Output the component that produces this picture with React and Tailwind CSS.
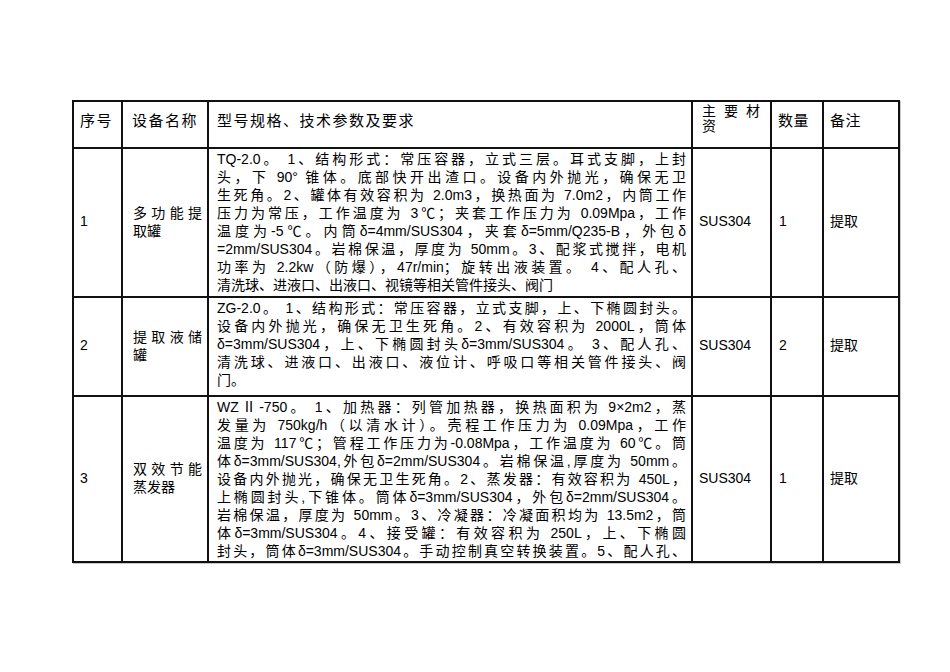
import React from "react";

const FONT = { fontFamily: '"Liberation Sans", "Noto Sans CJK SC", sans-serif' };

const rows = [
  {
    no: "1",
    name: ["多功能提", "取罐"],
    desc: [
      "TQ-2.0。 1、结构形式：常压容器，立式三层。耳式支脚，上封",
      "头，下 90° 锥体。底部快开出渣口。设备内外抛光，确保无卫",
      "生死角。2、罐体有效容积为 2.0m3，换热面为 7.0m2，内筒工作",
      "压力为常压，工作温度为 3℃；夹套工作压力为 0.09Mpa，工作",
      "温度为-5℃。内筒δ=4mm/SUS304，夹套δ=5mm/Q235-B，外包δ",
      "=2mm/SUS304。岩棉保温，厚度为 50mm。3、配浆式搅拌，电机",
      "功率为 2.2kw（防爆），47r/min；旋转出液装置。 4、配人孔、",
      "清洗球、进液口、出液口、视镜等相关管件接头、阀门",
    ],
    justifyAll: false,
    mat: "SUS304",
    qty: "1",
    note: "提取",
  },
  {
    no: "2",
    name: ["提取液储", "罐"],
    desc: [
      "ZG-2.0。 1、结构形式：常压容器，立式支脚，上、下椭圆封头。",
      "设备内外抛光，确保无卫生死角。2、有效容积为 2000L，筒体",
      "δ=3mm/SUS304，上、下椭圆封头δ=3mm/SUS304。 3、配人孔、",
      "清洗球、进液口、出液口、液位计、呼吸口等相关管件接头、阀",
      "门。",
    ],
    justifyAll: false,
    mat: "SUS304",
    qty: "2",
    note: "提取",
  },
  {
    no: "3",
    name: ["双效节能", "蒸发器"],
    desc: [
      "WZⅡ-750。 1、加热器：列管加热器，换热面积为 9×2m2，蒸",
      "发量为 750kg/h（以清水计）。壳程工作压力为 0.09Mpa，工作",
      "温度为 117℃；管程工作压力为-0.08Mpa，工作温度为 60℃。筒",
      "体δ=3mm/SUS304,外包δ=2mm/SUS304。岩棉保温,厚度为 50mm。",
      "设备内外抛光，确保无卫生死角。2、蒸发器：有效容积为 450L，",
      "上椭圆封头,下锥体。筒体δ=3mm/SUS304，外包δ=2mm/SUS304。",
      "岩棉保温，厚度为 50mm。3、冷凝器：冷凝面积均为 13.5m2，筒",
      "体δ=3mm/SUS304。4、接受罐：有效容积为 250L，上、下椭圆",
      "封头，筒体δ=3mm/SUS304。手动控制真空转换装置。5、配人孔、",
    ],
    justifyAll: true,
    mat: "SUS304",
    qty: "1",
    note: "提取",
  },
];

const cell = "border-r-2 border-b-2 border-[#111] overflow-hidden";

function Lines({ lines, lh = "leading-[18px]", justifyAll = false }) {
  return (
    <div className={`w-full ${lh}`}>
      {lines.map((l, i) => (
        <div
          key={i}
          className={
            justifyAll || i < lines.length - 1
              ? "text-justify [text-align-last:justify]"
              : "text-left"
          }
        >
          {l}
        </div>
      ))}
    </div>
  );
}

export default function App() {
  return (
    <div className="w-[950px] h-[672px] bg-white pt-[100px] pl-[72px] text-black" style={FONT}>
      <div className="grid w-[828px] grid-cols-[49px_86px_484px_79px_52px_76px] grid-rows-[47px_149px_99px_166px] border-l-2 border-t-2 border-[#111] shadow-[1px_1px_0_#c8c8c8]">
        {/* header */}
        <div className={`${cell} flex items-center pb-[6px] pl-[6px] text-[15px] tracking-[1.5px]`}>序号</div>
        <div className={`${cell} flex items-center pb-[6px] pl-[9px] text-[15px] tracking-[1.5px]`}>设备名称</div>
        <div className={`${cell} flex items-center pb-[6px] pl-[8px] text-[15px] tracking-[1.5px]`}>型号规格、技术参数及要求</div>
        <div className={`${cell} flex items-center pb-[11px] pl-[9px] pr-[10px] text-[14px]`}>
          <Lines lines={["主要材", "资"]} lh="leading-[15px]" />
        </div>
        <div className={`${cell} flex items-center pb-[6px] pl-[6px] text-[15px] tracking-[0.5px]`}>数量</div>
        <div className={`${cell} flex items-center pb-[6px] pl-[6px] text-[15px] tracking-[0.5px]`}>备注</div>

        {rows.map((r) => (
          <React.Fragment key={r.no}>
            <div className={`${cell} flex items-center pb-[2px] pl-[6px] text-[14px]`}>{r.no}</div>
            <div className={`${cell} flex items-center pb-[2px] pl-[10px] pr-[5px] text-[14px]`}>
              <Lines lines={r.name} />
            </div>
            <div className={`${cell} pt-[1px] pl-[8px] pr-[5px] text-[14px]`}>
              <Lines lines={r.desc} justifyAll={r.justifyAll} />
            </div>
            <div className={`${cell} flex items-center pb-[2px] pl-[6px] text-[14px]`}>{r.mat}</div>
            <div className={`${cell} flex items-center pb-[2px] pl-[7px] text-[14px]`}>{r.qty}</div>
            <div className={`${cell} flex items-center pb-[2px] pl-[6px] text-[14px]`}>{r.note}</div>
          </React.Fragment>
        ))}
      </div>
    </div>
  );
}
